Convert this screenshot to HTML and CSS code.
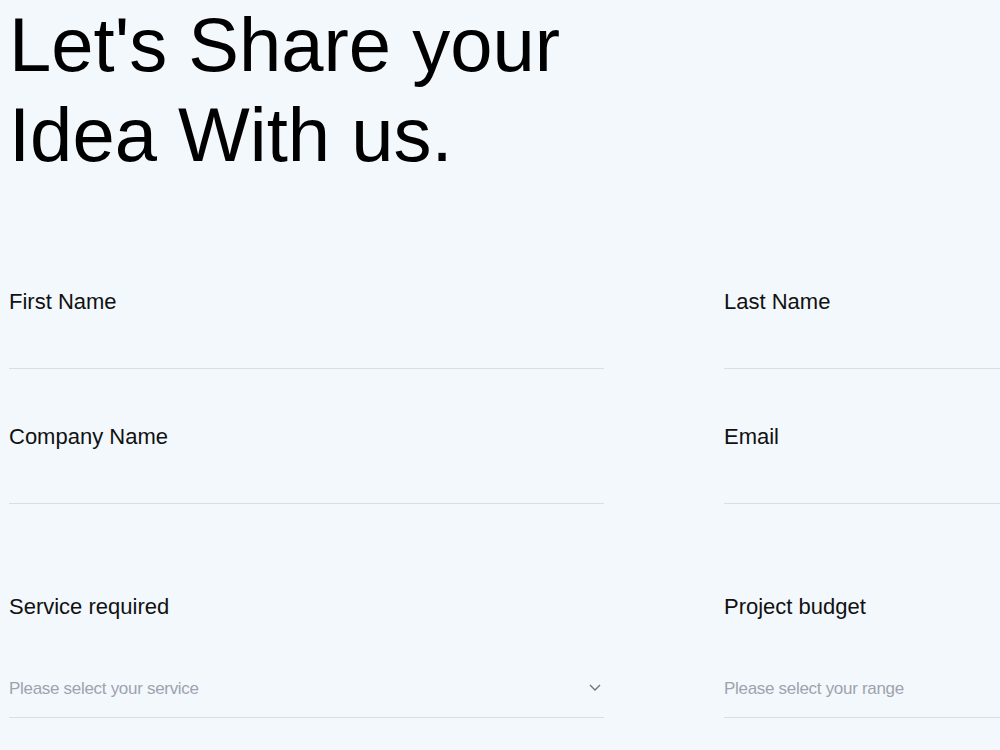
FILE: index.html
```html
<!DOCTYPE html>
<html>
<head>
<meta name="viewport" content="width=device-width, initial-scale=1.0">
<link rel="stylesheet" href="styles.css">
</head>
<body>

<div class="contact">
  <h1 class="title">Let's Share your<br>Idea With us.</h1>

  <form class="form">
    <div class="field">
      <label for="first">First Name</label>
      <input id="first" type="text">
    </div>
    <div class="field">
      <label for="last">Last Name</label>
      <input id="last" type="text">
    </div>
    <div class="field">
      <label for="company">Company Name</label>
      <input id="company" type="text">
    </div>
    <div class="field">
      <label for="email">Email</label>
      <input id="email" type="email">
    </div>
    <div class="field select-field">
      <label for="service">Service required</label>
      <div class="select-wrap">
        <select id="service">
          <option value="" selected>Please select your service</option>
          <option>Web design</option>
          <option>Branding</option>
          <option>Development</option>
        </select>
        <svg class="chevron" width="12" height="7" viewBox="0 0 12 7">
          <path d="M1 1l5 5 5-5" fill="none" stroke="#6b7280" stroke-width="1.3"/>
        </svg>
      </div>
    </div>
    <div class="field select-field">
      <label for="budget">Project budget</label>
      <div class="select-wrap">
        <select id="budget">
          <option value="" selected>Please select your range</option>
          <option>$1k - $5k</option>
          <option>$5k - $20k</option>
          <option>$20k+</option>
        </select>
        <svg class="chevron" width="12" height="7" viewBox="0 0 12 7">
          <path d="M1 1l5 5 5-5" fill="none" stroke="#6b7280" stroke-width="1.3"/>
        </svg>
      </div>
    </div>
  </form>
</div>

</body>
</html>
```

FILE: styles.css
```css
html, body {
  margin: 0;
  overflow: hidden;
}

body {
  background-color: #f3f8fd;
  font-family: "Liberation Sans", Arial, sans-serif;
  color: #111;
}

.contact {
  padding: 0 9px;
}

.title {
  margin: 0;
  font-size: 76px;
  line-height: 90px;
  font-weight: normal;
  color: #000;
}

.form {
  display: grid;
  grid-template-columns: 595px 595px;
  column-gap: 120px;
  row-gap: 55px;
  margin-top: 109px;
}

.field {
  display: flex;
  flex-direction: column;
}

.field label {
  font-size: 22px;
  line-height: 26px;
}

.field input {
  height: 41px;
  margin-top: 12px;
  padding: 0;
  border: none;
  border-bottom: 1px solid #d9dee5;
  background: transparent;
  font: inherit;
  font-size: 17px;
  outline: none;
}

.select-field {
  margin-top: 35px;
}

.select-wrap {
  position: relative;
  margin-top: 12px;
}

.select-wrap select {
  display: block;
  width: 100%;
  height: 86px;
  padding: 27px 0 0;
  border: none;
  border-bottom: 1px solid #d9dee5;
  border-radius: 0;
  background: transparent;
  appearance: none;
  -webkit-appearance: none;
  font-family: inherit;
  font-size: 17px;
  letter-spacing: -0.3px;
  color: #9ea3ae;
  outline: none;
}

.chevron {
  position: absolute;
  right: 3px;
  top: 52px;
  pointer-events: none;
}
```
